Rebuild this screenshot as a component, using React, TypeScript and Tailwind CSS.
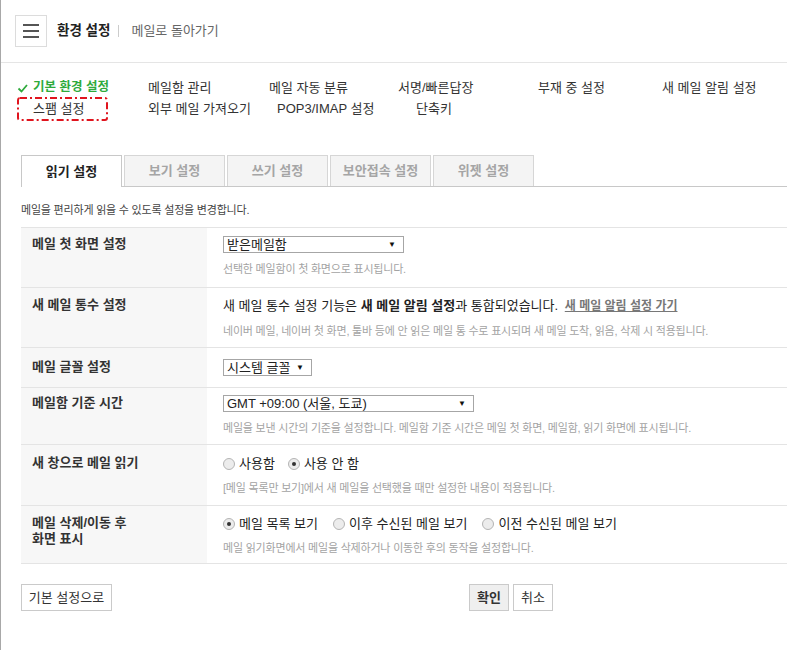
import React from "react";

const navRow1 = [
  { label: "메일함 관리", w: "w-[121px]" },
  { label: "메일 자동 분류", w: "w-[129px]" },
  { label: "서명/빠른답장", w: "w-[140px]" },
  { label: "부재 중 설정", w: "w-[124px]" },
  { label: "새 메일 알림 설정", w: "" },
];

const navRow2 = [
  { label: "외부 메일 가져오기", w: "w-[129px]" },
  { label: "POP3/IMAP 설정", w: "w-[139px]" },
  { label: "단축키", w: "" },
];

const tabs = ["읽기 설정", "보기 설정", "쓰기 설정", "보안접속 설정", "위젯 설정"];

function Select({ value, width }: { value: string; width: string }) {
  return (
    <div
      className={`flex h-[17px] ${width} items-center justify-between border border-[#a6a6a6] bg-white pl-[3px] pr-[7px] text-[13px] leading-[15px] text-[#222]`}
    >
      <span>{value}</span>
      <span className="text-[8px] text-[#111]">▼</span>
    </div>
  );
}

function Radio({ label, checked }: { label: string; checked?: boolean }) {
  return (
    <span className="flex h-[17px] items-center gap-[4px]">
      <span className="flex h-[12px] w-[12px] items-center justify-center rounded-full border border-[#b4b4b4] bg-[#ececec]">
        {checked && <span className="h-[4px] w-[4px] rounded-full bg-[#333]" />}
      </span>
      <span className="text-[13px] leading-[17px] text-[#222]">{label}</span>
    </span>
  );
}

function Help({ children }: { children: React.ReactNode }) {
  return (
    <p className="mt-[9px] text-[11px] leading-[14px] tracking-[-0.2px] text-[#a3a3a3]">
      {children}
    </p>
  );
}

function Row({
  label,
  children,
  pad = "pt-[9px] pb-[11px]",
}: {
  label: React.ReactNode;
  children: React.ReactNode;
  pad?: string;
}) {
  return (
    <div className="flex border-b border-[#e4e4e4]">
      <div className={`w-[186px] shrink-0 bg-[#f7f7f7] pl-[11px] ${pad}`}>
        <div className="text-[13px] font-bold leading-[16px] text-[#333]">{label}</div>
      </div>
      <div className={`flex-1 pl-[16px] ${pad}`}>{children}</div>
    </div>
  );
}

export default function App() {
  return (
    <div className="h-[650px] overflow-hidden border-l border-[#a8a8a8] bg-white font-['Liberation_Sans','Noto_Sans_CJK_KR',sans-serif] text-[#333]">
      {/* Header */}
      <div className="flex h-[63px] items-center border-b border-[#e5e5e5] pl-[14px]">
        <button className="flex h-[32px] w-[32px] flex-col items-center justify-center gap-[4px] border border-[#dcdcdc] bg-white">
          <span className="h-[2px] w-[16px] bg-[#555]" />
          <span className="h-[2px] w-[16px] bg-[#555]" />
          <span className="h-[2px] w-[16px] bg-[#555]" />
        </button>
        <span className="ml-[10px] text-[13.5px] font-bold text-[#222]">환경 설정</span>
        <span className="ml-[8px] mr-[12px] h-[12px] w-px bg-[#ccc]" />
        <span className="text-[13px] text-[#666]">메일로 돌아가기</span>
      </div>

      {/* Menu */}
      <div className="pl-[16px] pt-[14px] text-[13px] leading-[21px] text-[#333]">
        <div className="flex">
          <div className="flex w-[131px] items-center text-[12.5px] font-bold text-[#2eaa3c]">
            <svg width="16" height="12" viewBox="0 0 16 12" className="shrink-0">
              <path d="M1.5 6.5 L4.5 9.5 L10 3" fill="none" stroke="#2eaa3c" strokeWidth="1.8" />
            </svg>
            <span>기본 환경 설정</span>
          </div>
          {navRow1.map((n) => (
            <div key={n.label} className={n.w}>
              {n.label}
            </div>
          ))}
        </div>
        <div className="flex">
          <div className="w-[131px]">
            <span className="relative inline-block w-[91px] pl-[16px]">
              스팸 설정
              <svg className="absolute left-0 top-[-1px] h-[24px] w-[91px]" viewBox="0 0 91 24">
                <rect
                  x="1"
                  y="1"
                  width="89"
                  height="22"
                  rx="2"
                  fill="none"
                  stroke="#e0141e"
                  strokeWidth="2"
                  strokeDasharray="7 3 2 3"
                />
              </svg>
            </span>
          </div>
          {navRow2.map((n) => (
            <div key={n.label} className={n.w}>
              {n.label}
            </div>
          ))}
        </div>
      </div>

      <div className="ml-[20px] w-[980px]">
        {/* Tabs */}
        <div className="mt-[36px] flex gap-[2px] border-b border-[#c8c8c8]">
          {tabs.map((t, i) =>
            i === 0 ? (
              <div
                key={t}
                className="-mb-px flex h-[32px] w-[101px] items-center justify-center border border-b-0 border-[#c8c8c8] bg-white text-[13px] font-bold text-[#222]"
              >
                {t}
              </div>
            ) : (
              <div
                key={t}
                className="flex h-[31px] w-[101px] items-center justify-center border border-b-0 border-[#d6d6d6] bg-[#f4f4f4] text-[13px] font-bold text-[#a5a5a5]"
              >
                {t}
              </div>
            )
          )}
        </div>

        <p className="mt-[16px] text-[11px] leading-[14px] tracking-[-0.2px] text-[#444]">
          메일을 편리하게 읽을 수 있도록 설정을 변경합니다.
        </p>

        {/* Settings table */}
        <div className="mt-[10px] border-t border-[#e4e4e4]">
          <Row label="메일 첫 화면 설정" pad="pt-[8px] pb-[11px]">
            <Select value="받은메일함" width="w-[181px]" />
            <Help>선택한 메일함이 첫 화면으로 표시됩니다.</Help>
          </Row>

          <Row label="새 메일 통수 설정" pad="pt-[9px] pb-[9px]">
            <p className="text-[13px] leading-[17px] text-[#222]">
              새 메일 통수 설정 기능은 <b>새 메일 알림 설정</b>과 통합되었습니다.{" "}
              <a className="ml-[3px] text-[12px] font-bold text-[#777] underline">
                새 메일 알림 설정 가기
              </a>
            </p>
            <Help>
              네이버 메일, 네이버 첫 화면, 툴바 등에 안 읽은 메일 통 수로 표시되며 새 메일 도착, 읽음, 삭제 시
              적용됩니다.
            </Help>
          </Row>

          <Row label="메일 글꼴 설정" pad="pt-[11px] pb-[11px]">
            <Select value="시스템 글꼴" width="w-[89px]" />
          </Row>

          <Row label="메일함 기준 시간" pad="pt-[7px] pb-[9px]">
            <Select value="GMT +09:00 (서울, 도쿄)" width="w-[251px]" />
            <Help>
              메일을 보낸 시간의 기준을 설정합니다. 메일함 기준 시간은 메일 첫 화면, 메일함, 읽기 화면에
              표시됩니다.
            </Help>
          </Row>

          <Row label="새 창으로 메일 읽기" pad="pt-[10px] pb-[10px]">
            <div className="flex gap-[13px]">
              <Radio label="사용함" />
              <Radio label="사용 안 함" checked />
            </div>
            <Help>[메일 목록만 보기]에서 새 메일을 선택했을 때만 설정한 내용이 적용됩니다.</Help>
          </Row>

          <Row
            label={
              <>
                메일 삭제/이동 후
                <br />
                화면 표시
              </>
            }
            pad="pt-[9px] pb-[8px]"
          >
            <div className="flex gap-[15px]">
              <Radio label="메일 목록 보기" checked />
              <Radio label="이후 수신된 메일 보기" />
              <Radio label="이전 수신된 메일 보기" />
            </div>
            <Help>메일 읽기화면에서 메일을 삭제하거나 이동한 후의 동작을 설정합니다.</Help>
          </Row>
        </div>

        {/* Buttons */}
        <div className="mt-[20px] grid grid-cols-[1fr_auto_1fr] items-center">
          <div>
            <button className="h-[27px] w-[91px] border border-[#cacaca] bg-white text-[13px] text-[#333]">
              기본 설정으로
            </button>
          </div>
          <div className="flex gap-[4px]">
            <button className="h-[27px] w-[40px] border border-[#cacaca] bg-[#efefef] text-[13px] font-bold text-[#333]">
              확인
            </button>
            <button className="h-[27px] w-[40px] border border-[#cacaca] bg-white text-[13px] text-[#333]">
              취소
            </button>
          </div>
          <div />
        </div>
      </div>
    </div>
  );
}
